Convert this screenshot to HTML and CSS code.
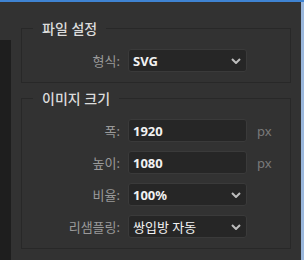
FILE: index.html
```html
<!DOCTYPE html>
<html>
<head>
    <meta charset="UTF-8">
    <title>내보내기 설정</title>
    <link rel="stylesheet" href="styles.css">
</head>
<body>
    <div class="topbar"></div>
    <div class="main">
        <div class="side"></div>
        <div class="content">
            <fieldset class="group group-file">
                <legend>파일 설정</legend>
                <div class="row">
                    <label>형식:</label>
                    <div class="field select">
                        <span class="value bold">SVG</span>
                        <svg class="chev" width="10" height="6" viewBox="0 0 10 6"><polyline points="1,1 5,5 9,1" /></svg>
                    </div>
                </div>
            </fieldset>
            <fieldset class="group">
                <legend>이미지 크기</legend>
                <div class="row">
                    <label>폭:</label>
                    <div class="field"><span class="value bold">1920</span></div>
                    <span class="unit">px</span>
                </div>
                <div class="row">
                    <label>높이:</label>
                    <div class="field"><span class="value bold">1080</span></div>
                    <span class="unit">px</span>
                </div>
                <div class="row">
                    <label>비율:</label>
                    <div class="field select">
                        <span class="value bold">100%</span>
                        <svg class="chev" width="10" height="6" viewBox="0 0 10 6"><polyline points="1,1 5,5 9,1" /></svg>
                    </div>
                </div>
                <div class="row">
                    <label>리샘플링:</label>
                    <div class="field select">
                        <span class="value">쌍입방 자동</span>
                        <svg class="chev" width="10" height="6" viewBox="0 0 10 6"><polyline points="1,1 5,5 9,1" /></svg>
                    </div>
                </div>
            </fieldset>
        </div>
        <div class="edge"></div>
    </div>
</body>
</html>
```

FILE: styles.css
```css
html, body {
    margin: 0;
    height: 100%;
}

body {
    font-family: "Noto Sans", "Noto Sans CJK KR", sans-serif;
    background-color: #323232;
    color: #ddd;
    overflow: hidden;
    display: flex;
    flex-direction: column;
}

.topbar {
    height: 2px;
    background-color: #3f83d2;
}

.main {
    flex: 1;
    display: flex;
}

.side {
    width: 11px;
    margin-top: 38px;
    background-color: #1e1e1e;
}

.content {
    flex: 1;
    padding: 18px 10px 0 10px;
}

.edge {
    width: 3px;
    background-color: #9ab7dc;
}

.group {
    margin: 0;
    border: 1px solid #282828;
    padding: 12px 0 10px 11px;
    display: flex;
    flex-direction: column;
    gap: 9px;
}

.group-file {
    margin-bottom: 7px;
}

.group legend {
    padding: 0 9px;
    font-size: 14px;
    line-height: 17px;
    color: #dcdcdc;
    font-weight: 500;
}

.row {
    display: flex;
    align-items: center;
    height: 23px;
}

.row label {
    width: 87px;
    text-align: right;
    font-size: 13px;
    color: #9a9a9a;
    margin-right: 8px;
}

.field {
    box-sizing: border-box;
    width: 119px;
    height: 23px;
    border: 1px solid #3a3a3a;
    border-radius: 3px;
    background-color: #262626;
    display: flex;
    align-items: center;
    padding: 0 5px 0 4px;
}

.value {
    flex: 1;
    font-size: 13px;
    color: #f2f2f2;
}

.value.bold {
    font-weight: 700;
}

.chev {
    fill: none;
    stroke: #bdbdbd;
    stroke-width: 2;
}

.unit {
    margin-left: 10px;
    font-size: 13px;
    color: #7a7a7a;
}
```
